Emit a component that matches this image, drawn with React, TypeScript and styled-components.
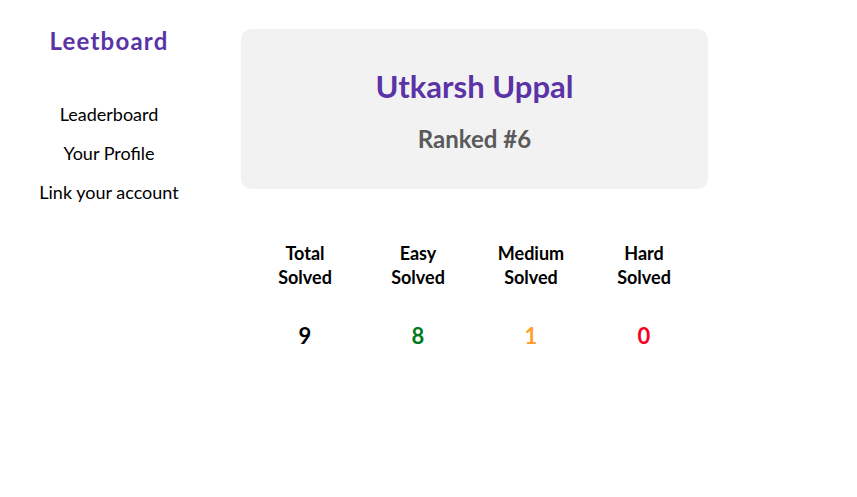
import React from "react";
import styled, { createGlobalStyle } from "styled-components";

const Global = createGlobalStyle`
  html, body { margin: 0; padding: 0; background: #fff; }
  body { font-family: "Lato", "Open Sans", sans-serif; color: #000; }
`;

const Page = styled.div`
  display: flex;
  align-items: flex-start;
  width: 857px;
  height: 497px;
`;

const Sidebar = styled.nav`
  width: 218px;
  display: flex;
  flex-direction: column;
  align-items: center;
  padding-top: 26px;
`;

const Brand = styled.div`
  font-size: 24px;
  font-weight: 700;
  letter-spacing: 1.2px;
  color: #5a33a6;
  line-height: 30px;
  margin-bottom: 47px;
`;

const NavItem = styled.a`
  font-size: 18px;
  line-height: 22px;
  margin-bottom: 17px;
  color: #000;
  text-decoration: none;
`;

const Main = styled.main`
  padding-left: 23px;
  padding-top: 29px;
  width: 467px;
  display: flex;
  flex-direction: column;
  align-items: center;
`;

const Card = styled.section`
  width: 467px;
  height: 160px;
  box-sizing: border-box;
  background: #f2f2f2;
  border-radius: 10px;
  display: flex;
  flex-direction: column;
  align-items: center;
  padding-top: 37px;
`;

const Name = styled.h1`
  margin: 0;
  font-size: 31px;
  line-height: 40px;
  font-weight: 700;
  color: #5a33a6;
`;

const Rank = styled.h2`
  margin: 19px 0 0;
  font-size: 24px;
  line-height: 28px;
  font-weight: 700;
  color: #5a5a5a;
`;

const Stats = styled.div`
  display: grid;
  grid-template-columns: repeat(4, 113px);
  margin-top: 52px;
`;

const Stat = styled.div`
  display: flex;
  flex-direction: column;
  align-items: center;
  text-align: center;
`;

const Label = styled.div`
  font-size: 18px;
  font-weight: 700;
  line-height: 24px;
`;

const Value = styled.div<{ $color: string }>`
  margin-top: 33px;
  font-size: 22px;
  font-weight: 700;
  line-height: 28px;
  color: ${(p) => p.$color};
`;

const stats = [
  { a: "Total", v: "9", c: "#000" },
  { a: "Easy", v: "8", c: "#007a1c" },
  { a: "Medium", v: "1", c: "#ffa12b" },
  { a: "Hard", v: "0", c: "#f50022" },
];

export default function App() {
  return (
    <Page>
      <Global />
      <Sidebar>
        <Brand>Leetboard</Brand>
        <NavItem>Leaderboard</NavItem>
        <NavItem>Your Profile</NavItem>
        <NavItem>Link your account</NavItem>
      </Sidebar>
      <Main>
        <Card>
          <Name>Utkarsh Uppal</Name>
          <Rank>Ranked #6</Rank>
        </Card>
        <Stats>
          {stats.map((s) => (
            <Stat key={s.a}>
              <Label>
                {s.a}
                <br />
                Solved
              </Label>
              <Value $color={s.c}>{s.v}</Value>
            </Stat>
          ))}
        </Stats>
      </Main>
    </Page>
  );
}
